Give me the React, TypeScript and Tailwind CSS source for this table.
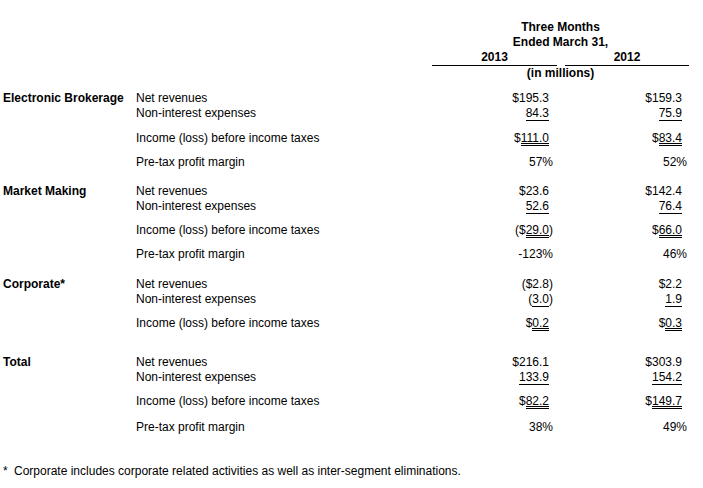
import React from 'react';

type Cell = { pre?: string; num: string; post?: string; line?: 'single' | 'double' };
type Row = { label: string; a?: Cell; b?: Cell; pct?: [string, string]; gap?: string };
type Block = { name: string; rows: Row[]; mt: string };

const blocks: Block[] = [
  {
    name: 'Electronic Brokerage',
    mt: 'mt-[10px]',
    rows: [
      { label: 'Net revenues', a: { pre: '$', num: '195.3' }, b: { pre: '$', num: '159.3' } },
      { label: 'Non-interest expenses', a: { num: '84.3', line: 'single' }, b: { num: '75.9', line: 'single' } },
      { label: 'Income (loss) before income taxes', a: { pre: '$', num: '111.0', line: 'double' }, b: { pre: '$', num: '83.4', line: 'double' }, gap: 'mt-[10px]' },
      { label: 'Pre-tax profit margin', pct: ['57%', '52%'], gap: 'mt-[9px]' },
    ],
  },
  {
    name: 'Market Making',
    mt: 'mt-[14px]',
    rows: [
      { label: 'Net revenues', a: { pre: '$', num: '23.6' }, b: { pre: '$', num: '142.4' } },
      { label: 'Non-interest expenses', a: { num: '52.6', line: 'single' }, b: { num: '76.4', line: 'single' } },
      { label: 'Income (loss) before income taxes', a: { pre: '($', num: '29.0', post: ')', line: 'double' }, b: { pre: '$', num: '66.0', line: 'double' }, gap: 'mt-[9px]' },
      { label: 'Pre-tax profit margin', pct: ['-123%', '46%'], gap: 'mt-[9px]' },
    ],
  },
  {
    name: 'Corporate*',
    mt: 'mt-[15px]',
    rows: [
      { label: 'Net revenues', a: { pre: '($', num: '2.8', post: ')' }, b: { pre: '$', num: '2.2' } },
      { label: 'Non-interest expenses', a: { pre: '(', num: '3.0', post: ')', line: 'single' }, b: { num: '1.9', line: 'single' } },
      { label: 'Income (loss) before income taxes', a: { pre: '$', num: '0.2', line: 'double' }, b: { pre: '$', num: '0.3', line: 'double' }, gap: 'mt-[9px]' },
    ],
  },
  {
    name: 'Total',
    mt: 'mt-[24px]',
    rows: [
      { label: 'Net revenues', a: { pre: '$', num: '216.1' }, b: { pre: '$', num: '303.9' } },
      { label: 'Non-interest expenses', a: { num: '133.9', line: 'single' }, b: { num: '154.2', line: 'single' } },
      { label: 'Income (loss) before income taxes', a: { pre: '$', num: '82.2', line: 'double' }, b: { pre: '$', num: '149.7', line: 'double' }, gap: 'mt-[9px]' },
      { label: 'Pre-tax profit margin', pct: ['38%', '49%'], gap: 'mt-[11px]' },
    ],
  },
];

const Amount: React.FC<{ cell?: Cell }> = ({ cell }) => {
  if (!cell) return null;
  const lineCls =
    cell.line === 'double'
      ? 'border-b-[3px] border-double border-black'
      : cell.line === 'single'
      ? 'border-b border-black'
      : '';
  return (
    <>
      {cell.pre && <span>{cell.pre}</span>}
      <span className={`inline-block h-[15px] ${lineCls}`}>{cell.num}</span>
      <span className="inline-block w-[4px]">{cell.post}</span>
    </>
  );
};

export default function App() {
  return (
    <div className="w-[703px] h-[488px] bg-white text-black text-[12px] leading-[15px] pl-[3px] pt-[20px] font-['Liberation_Sans',Arial,sans-serif]">
      {/* Header */}
      <div className="flex font-bold">
        <div className="w-[429px]" />
        <div className="w-[257px] text-center">
          <div>Three Months</div>
          <div>Ended March 31,</div>
          <div className="flex">
            <div className="w-[125px] border-b border-black">2013</div>
            <div className="w-[8px]" />
            <div className="w-[124px] border-b border-black">2012</div>
          </div>
          <div>(in millions)</div>
        </div>
      </div>

      {/* Segments */}
      {blocks.map((block) => (
        <div key={block.name} className={block.mt}>
          {block.rows.map((row, i) => (
            <div key={row.label} className={`flex h-[15px] ${row.gap ?? ''}`}>
              <div className="w-[133px] font-bold whitespace-nowrap">{i === 0 ? block.name : ''}</div>
              <div className="w-[296px]">{row.label}</div>
              <div className="w-[125px] flex justify-end items-start pr-[4px] whitespace-nowrap">
                {row.pct ? row.pct[0] : <Amount cell={row.a} />}
              </div>
              <div className="w-[8px]" />
              <div className={`w-[124px] flex justify-end items-start whitespace-nowrap ${row.pct ? 'pr-[2px]' : 'pr-[3px]'}`}>
                {row.pct ? row.pct[1] : <Amount cell={row.b} />}
              </div>
            </div>
          ))}
        </div>
      ))}

      {/* Footnote */}
      <div className="mt-[29px] flex">
        <span className="w-[11px]">*</span>
        <span>Corporate includes corporate related activities as well as inter-segment eliminations.</span>
      </div>
    </div>
  );
}
